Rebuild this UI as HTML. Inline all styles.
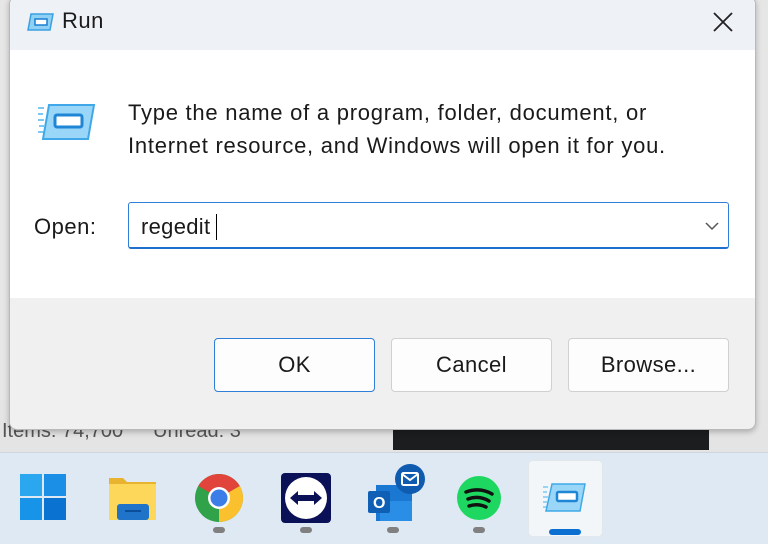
<!DOCTYPE html>
<html><head><meta charset="utf-8"><style>
*{margin:0;padding:0;box-sizing:border-box}
body{width:768px;height:544px;overflow:hidden;position:relative;background:#e6e6e6;font-family:"Liberation Sans",sans-serif;color:#1a1a1a}
.status{position:absolute;left:0;top:400px;width:768px;height:52px;background:#e4e4e4}
.status span{position:absolute;top:20px;font-size:20px;color:#555}
.dark{position:absolute;left:393px;top:420px;width:316px;height:30px;background:#1b1d1f}
.dlg{position:absolute;left:9px;top:-4px;width:747px;height:434px;background:#f0f0f0;border:1px solid #b9b9b9;border-radius:8px;overflow:hidden;box-shadow:0 2px 6px rgba(0,0,0,.25)}
.title{position:absolute;left:0;top:0;width:100%;height:53px;background:#eef1f6}
.title .t{position:absolute;left:52px;top:11px;font-size:22px;letter-spacing:.5px}
.body{position:absolute;left:0;top:53px;width:100%;height:248px;background:#fff}
.desc{position:absolute;left:118px;top:46px;font-size:22px;letter-spacing:.75px;line-height:33px;color:#1a1a1a}
.open{position:absolute;left:24px;top:164px;font-size:22px;letter-spacing:.5px}
.inp{position:absolute;left:118px;top:152px;width:601px;height:47px;border:1px solid #2f7fd8;border-bottom:2px solid #1f6fcf;border-radius:3px;background:#fff}
.inp span{position:absolute;left:12px;top:11px;font-size:22px;letter-spacing:.3px}
.inp i{position:absolute;left:87px;top:11px;width:1px;height:26px;background:#000}
.btn{position:absolute;top:341px;width:161px;height:54px;border:1px solid #d0d0d0;border-radius:4px;background:#fdfdfd;font-size:22px;letter-spacing:.4px;text-align:center;line-height:52px}
.taskbar{position:absolute;left:0;top:452px;width:768px;height:92px;background:#dfe9f3;border-top:1px solid #cfd6de}
.dot{position:absolute;top:527px;width:12px;height:6px;border-radius:3px;background:#808080}
</style></head><body>
<div class="status"><span style="left:2px">Items: 74,700</span><span style="left:153px">Unread: 3</span></div>
<div class="dark"></div>
<div class="dlg">
 <div class="title">
  <svg style="position:absolute;left:16px;top:15px" width="30" height="20" viewBox="0 0 30 20"><path d="M5 2h22l-3 16H2z" fill="#8fd0f5" stroke="#3aa0e0" stroke-width="1.5"/><rect x="9" y="7" width="12" height="6" fill="#fff" stroke="#1a7fd0" stroke-width="1.5"/></svg>
  <div class="t">Run</div>
  <svg style="position:absolute;left:702px;top:14px" width="22" height="22" viewBox="0 0 22 22"><path d="M2 2L20 20M20 2L2 20" stroke="#222" stroke-width="1.8"/></svg>
 </div>
 <div class="body">
  <svg style="position:absolute;left:26px;top:52px" width="60" height="40" viewBox="0 0 60 40"><g stroke="#7cc8f2" stroke-width="2"><path d="M2 6h6M2 12h5M2 18h6M3 24h5M2 30h6"/></g><path d="M13 3h45l-6 34H7z" fill="#9ad6f7" stroke="#40a8e8" stroke-width="2"/><rect x="19" y="13" width="27" height="12" rx="2" fill="#fff" stroke="#1f86d6" stroke-width="3"/></svg>
  <div class="desc">Type the name of a program, folder, document, or<br>Internet resource, and Windows will open it for you.</div>
  <div class="open">Open:</div>
  <div class="inp"><span>regedit</span><i></i>
   <svg style="position:absolute;left:575px;top:18px" width="16" height="10" viewBox="0 0 16 10"><path d="M2 2l6 6 6-6" fill="none" stroke="#555" stroke-width="1.5"/></svg></div>
 </div>
 <div class="btn" style="left:204px;border-color:#2f7fd8">OK</div>
 <div class="btn" style="left:381px">Cancel</div>
 <div class="btn" style="left:558px">Browse...</div>
</div>
<div class="taskbar"></div>
<svg style="position:absolute;left:20px;top:474px" width="47" height="47" viewBox="0 0 47 47"><rect x="0" y="0" width="22" height="22" fill="#2aa7ef"/><rect x="24" y="0" width="22" height="22" fill="#1b8ee6"/><rect x="0" y="24" width="22" height="22" fill="#1794e8"/><rect x="24" y="24" width="22" height="22" fill="#0a73d2"/></svg>
<svg style="position:absolute;left:108px;top:475px" width="50" height="46" viewBox="0 0 50 46"><path d="M1 3h14l4 4h29v38H1z" fill="#e8b430"/><rect x="1" y="9" width="47" height="36" fill="#fcd75a"/><rect x="9" y="29" width="32" height="16" rx="3" fill="#1f73c8"/><rect x="17" y="35" width="16" height="2" fill="#0a4d9a"/></svg>
<svg style="position:absolute;left:194px;top:473px" width="50" height="50" viewBox="0 0 50 50"><circle cx="25" cy="25" r="24" fill="#2fa24a"/><path d="M25 25L4.2 13A24 24 0 0 1 45.8 13z" fill="#e0443a"/><path d="M25 25L45.8 13A24 24 0 0 1 25 49z" fill="#fbc02d"/><circle cx="25" cy="25" r="11" fill="#fff"/><circle cx="25" cy="25" r="8.5" fill="#3b7ee8"/></svg>
<svg style="position:absolute;left:281px;top:473px" width="50" height="50" viewBox="0 0 50 50"><rect width="50" height="50" rx="4" fill="#0b1157"/><circle cx="25" cy="25" r="21" fill="#fff"/><path d="M9 25l8-7v4h16v-4l8 7-8 7v-4H17v4z" fill="#0b1157"/></svg>
<svg style="position:absolute;left:366px;top:463px" width="62" height="62" viewBox="0 0 62 62"><rect x="10" y="22" width="36" height="36" fill="#1a78d2"/><rect x="14" y="38" width="32" height="20" fill="#2a8ee6"/><rect x="2" y="28" width="22" height="22" rx="2" fill="#0f5fb5"/><text x="7" y="45" font-family="Liberation Sans" font-weight="bold" font-size="16" fill="#fff">O</text><circle cx="44" cy="16" r="15" fill="#0e5bb0"/><rect x="36" y="10" width="16" height="12" rx="1.5" fill="none" stroke="#fff" stroke-width="2"/><path d="M36 11l8 6 8-6" fill="none" stroke="#fff" stroke-width="2"/></svg>
<svg style="position:absolute;left:456px;top:475px" width="46" height="46" viewBox="0 0 46 46"><circle cx="23" cy="23" r="22" fill="#1ed760"/><path d="M10 17q14-5 26 2M12 24q11-4 21 2M13 31q9-3 17 1" fill="none" stroke="#111" stroke-width="3.5" stroke-linecap="round"/></svg>
<div style="position:absolute;left:528px;top:460px;width:75px;height:77px;background:#f3f6f9;border-radius:5px;border:1px solid #e2e7ec"></div>
<svg style="position:absolute;left:541px;top:482px" width="46" height="32" viewBox="0 0 46 32"><g stroke="#7cc8f2" stroke-width="1.5"><path d="M2 5h5M2 10h4M2 15h5M2 20h4M2 25h5"/></g><path d="M11 2h33l-5 27H5z" fill="#9ad6f7" stroke="#40a8e8" stroke-width="1.5"/><rect x="16" y="10" width="20" height="9" rx="1.5" fill="#fff" stroke="#1f86d6" stroke-width="2.5"/></svg>
<div style="position:absolute;left:549px;top:529px;width:32px;height:6px;border-radius:3px;background:#0a6fd0"></div>
<div class="dot" style="left:213px"></div>
<div class="dot" style="left:300px"></div>
<div class="dot" style="left:387px"></div>
<div class="dot" style="left:473px"></div>
</body></html>
